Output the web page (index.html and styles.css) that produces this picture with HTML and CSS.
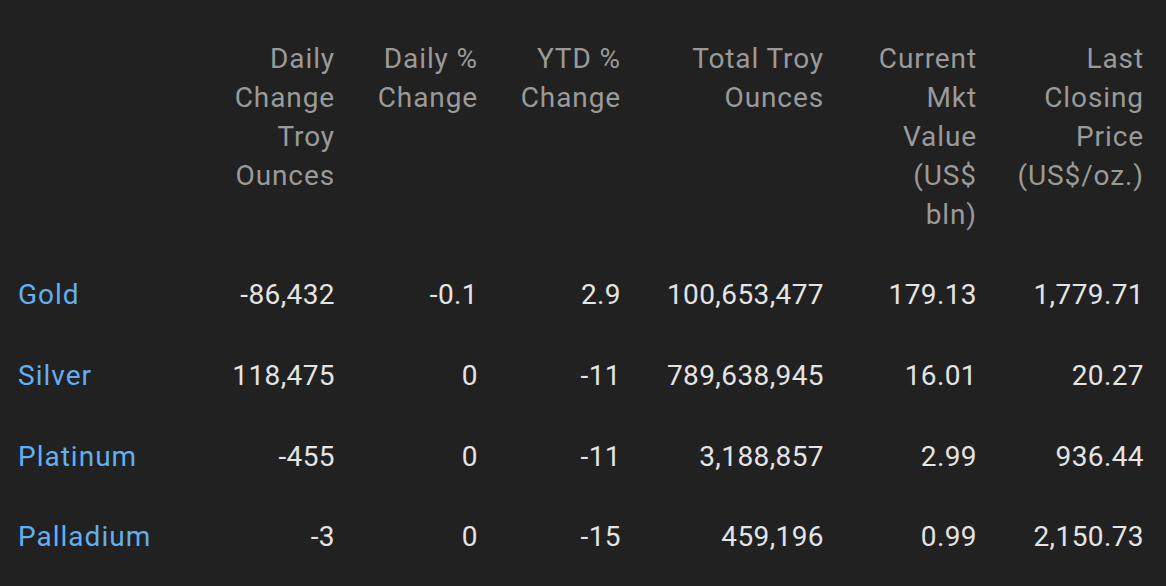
FILE: index.html
```html
<!DOCTYPE html>
<html>
<head>
<meta charset="utf-8">
<link rel="stylesheet" href="styles.css">
</head>
<body>
<table class="metals">
  <colgroup>
    <col class="c-name">
    <col class="c-num">
    <col class="c-num">
    <col class="c-num">
    <col class="c-wide">
    <col class="c-mkt">
    <col class="c-last">
  </colgroup>
  <thead>
    <tr>
      <th class="name"></th>
      <th>Daily<br>Change<br>Troy<br>Ounces</th>
      <th>Daily %<br>Change</th>
      <th>YTD %<br>Change</th>
      <th>Total Troy<br>Ounces</th>
      <th>Current<br>Mkt<br>Value<br>(US$<br>bln)</th>
      <th class="last">Last<br>Closing<br>Price<br>(US$/oz.)</th>
    </tr>
  </thead>
  <tbody>
    <tr>
      <td class="name"><a href="#">Gold</a></td>
      <td>-86,432</td>
      <td>-0.1</td>
      <td>2.9</td>
      <td>100,653,477</td>
      <td>179.13</td>
      <td class="last">1,779.71</td>
    </tr>
    <tr>
      <td class="name"><a href="#">Silver</a></td>
      <td>118,475</td>
      <td>0</td>
      <td>-11</td>
      <td>789,638,945</td>
      <td>16.01</td>
      <td class="last">20.27</td>
    </tr>
    <tr>
      <td class="name"><a href="#">Platinum</a></td>
      <td>-455</td>
      <td>0</td>
      <td>-11</td>
      <td>3,188,857</td>
      <td>2.99</td>
      <td class="last">936.44</td>
    </tr>
    <tr>
      <td class="name"><a href="#">Palladium</a></td>
      <td>-3</td>
      <td>0</td>
      <td>-15</td>
      <td>459,196</td>
      <td>0.99</td>
      <td class="last">2,150.73</td>
    </tr>
  </tbody>
</table>
</body>
</html>
```

FILE: styles.css
```css
html, body {
  margin: 0;
  padding: 0;
  background: #212121;
}

body {
  font-family: Roboto, "Noto Sans", sans-serif;
  font-size: 28px;
  line-height: 39px;
  color: #e4e4e4;
  letter-spacing: 0.4px;
}

.metals {
  width: 1166px;
  border-collapse: collapse;
  table-layout: fixed;
}

.c-name { width: 192px; }
.c-num { width: 143px; }
.c-wide { width: 203px; }
.c-mkt { width: 153px; }
.c-last { width: 189px; }

.metals th {
  font-weight: 400;
  color: #9a9a9a;
  text-align: right;
  vertical-align: top;
  padding: 39px 0 20.7px 0;
  white-space: nowrap;
  letter-spacing: 0.9px;
}

.metals td {
  text-align: right;
  padding: 20.8px 0;
  white-space: nowrap;
}

.metals .name {
  text-align: left;
  padding-left: 18px;
}

.metals .last {
  padding-right: 22px;
}

.metals a {
  color: #62aff2;
  text-decoration: none;
  letter-spacing: 1px;
}
```
